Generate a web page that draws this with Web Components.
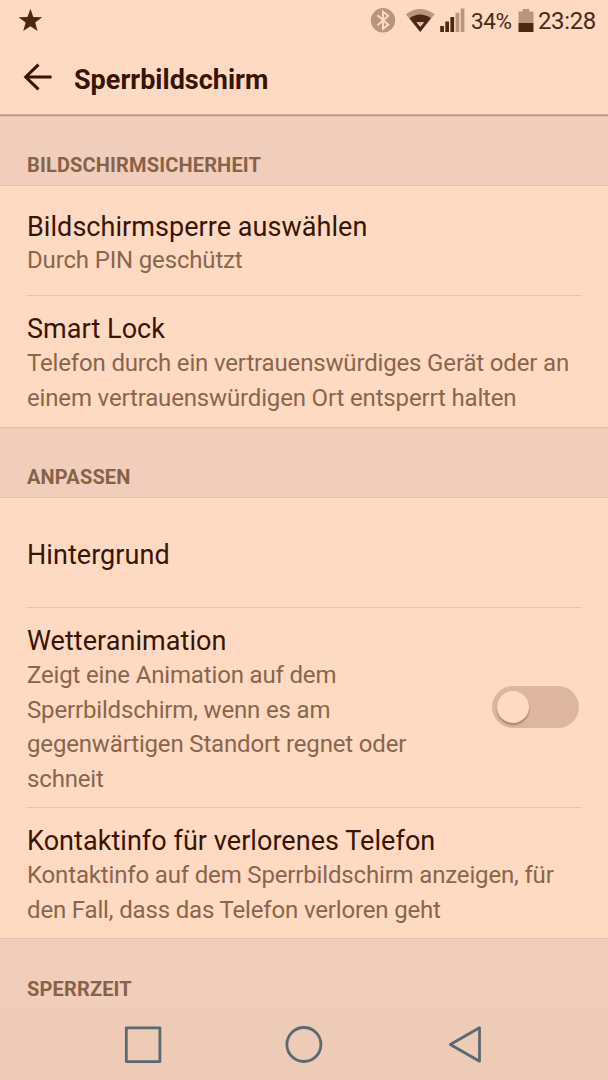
<!DOCTYPE html>
<html lang="de">
<head>
<meta charset="utf-8">
<title>Sperrbildschirm</title>
<style>
html,body{margin:0;height:100%;background:#ffdac2}
body{font-family:Roboto,"Liberation Sans",sans-serif;color:#381404;overflow:hidden}
</style>
</head>
<body>
<lock-settings></lock-settings>
<script>
const define = (name, html) => customElements.define(name, class extends HTMLElement {
  constructor() {
    super();
    this.attachShadow({ mode: 'open' }).innerHTML = html;
  }
});

define('status-bar', `
<style>
:host{display:flex;height:42px;align-items:flex-start;color:#4b2814}
svg{display:block;flex:none}
.star{margin:8px 0 0 18px}
.right{margin-left:auto;display:flex;padding-right:12px}
.t{line-height:28px;white-space:nowrap}
.pct{font-size:22.5px;width:42px;margin:7px 0 0 4px;letter-spacing:-.4px}
.time{font-size:24px;margin:7px 0 0 4px;letter-spacing:-.35px}
</style>
<svg class="star" width="25" height="24" viewBox="0 0 25 24"><path fill="#4b2814" d="M12.4.7l2.9 8.2 8.9.3-7 5.4 2.4 8.5-7.2-4.8-7.2 4.8 2.4-8.5-7-5.4 8.9-.3z"/></svg>
<div class="right">
<svg width="101" height="42" viewBox="0 0 101 42">
<circle cx="17" cy="20.3" r="12.2" fill="#b9957f"/>
<path d="M11.5 15.2l10.7 9.6-5.2 4V11.800l5.200 4-10.700 9.600" fill="none" stroke="#ffdac2" stroke-width="1.9"/>
<path d="M39.8 14.2Q54.2 3.8 68.6 14.2L54.2 32z" fill="#b9957f"/>
<path d="M43.5 18.3Q54.2 10.8 64.9 18.3L54.2 32z" fill="#4b2814"/>
<path d="M51.6 22.7h5.400l-2.700 3.200z" fill="#b9957f" stroke="#ffdac2" stroke-width="1.1"/>
<path d="M74.2 26h3.7v6h-3.7zM79.3 21.5h3.7V32h-3.7zM84.4 17h3.7v15h-3.7z" fill="#4b2814"/>
<path d="M89.6 12.8h3.7V32h-3.7zM94.7 8.5h3.7V32h-3.7z" fill="#b9957f"/>
</svg>
<span class="t pct">34%</span>
<svg width="16" height="42" viewBox="0 0 16 42" style="margin-left:5px"><path d="M.5 11.5h4.2V9h6.5v2.5h4.3V23H.5z" fill="#b9957f"/><path d="M.5 23h15v9H.5z" fill="#4b2814"/></svg>
<span class="t time">23:28</span>
</div>`);

define('app-bar', `
<style>
:host{display:flex;height:72px;position:relative;z-index:1;background:#ffdac2;border-bottom:1px solid #d6b199;box-shadow:0 1px 1px rgba(100,55,30,.4)}
svg{display:block;margin:20px 0 0 23px;flex:none}
h1{margin:20.500px 0 0 22px;font-size:27px;line-height:34px;font-weight:700}
</style>
<svg width="29" height="30" viewBox="0 0 29 30"><path d="M28.5 15H3M15.5 2.7L2.700 15l12.800 12.300" fill="none" stroke="#381404" stroke-width="3"/></svg>
<h1><slot></slot></h1>`);

define('section-header', `
<style>
:host{display:block;box-sizing:border-box;height:71px;padding:37px 27px 0;background:#f1cebb;border-top:1px solid #e3bfaa;border-bottom:1px solid #e3bfaa;color:#886248;font-size:20px;line-height:24px;font-weight:700;letter-spacing:.16px}
:host([first]){border-top-color:#f1cebb}
:host([last]){border-bottom:0;padding-top:38px}
</style>
<slot></slot>`);

define('setting-item', `
<style>
:host{display:flex;box-sizing:border-box;margin:0 27px;height:var(--h);padding-top:var(--top);border-bottom:1px solid #e6c1ab}
:host([end]){border-bottom:0}
.copy{flex:1;white-space:nowrap}
.title{font-size:27px;line-height:34px;letter-spacing:.05px}
.sum{font-size:24px;line-height:34.5px;color:#8a654d;letter-spacing:-.16px;margin-top:var(--sum-shift,0px)}
</style>
<div class="copy"><div class="title"><slot name="title"></slot></div><div class="sum"><slot></slot></div></div>
<slot name="control"></slot>`);

define('toggle-switch', `
<style>
:host{display:block;box-sizing:border-box;width:87.5px;height:42px;border-radius:21px;background:#dcb69f;padding:5px;margin:62px 2px 0 0}
i{display:block;width:32px;height:32px;border-radius:50%;background:#ffdac2;box-shadow:0 2px 2px rgba(90,45,20,.4)}
</style><i></i>`);

define('nav-bar', `
<style>
:host{display:block;height:71px;background:#eecbb6}
svg{display:block}
</style>
<svg width="608" height="71" viewBox="0 0 608 71" fill="none" stroke="#5b6970" stroke-width="2.8" stroke-linejoin="round">
<path d="M126.3 18.8h33.6v33.8h-33.6z"/><circle cx="303.9" cy="35.5" r="17"/><path d="M479.5 18.8v33.4L450.3 35.5z"/></svg>`);

define('lock-settings', `
<style>
:host{display:flex;flex-direction:column;width:608px;height:1080px;overflow:hidden;background:#ffdac2}
main{flex:1;min-height:0;overflow:hidden}
</style>
<status-bar></status-bar>
<app-bar>Sperrbildschirm</app-bar>
<main>
<section-header first>BILDSCHIRMSICHERHEIT</section-header>
<setting-item style="--h:110px;--top:24px;--sum-shift:-1px"><span slot="title">Bildschirmsperre auswählen</span>Durch PIN geschützt</setting-item>
<setting-item end style="--h:131px;--top:16px"><span slot="title">Smart Lock</span>Telefon durch ein vertrauenswürdiges Gerät oder an<br>einem vertrauenswürdigen Ort entsperrt halten</setting-item>
<section-header>ANPASSEN</section-header>
<setting-item style="--h:110px;--top:40px"><span slot="title">Hintergrund</span></setting-item>
<setting-item style="--h:200px;--top:16px"><span slot="title">Wetteranimation</span>Zeigt eine Animation auf dem<br>Sperrbildschirm, wenn es am<br>gegenwärtigen Standort regnet oder<br>schneit<toggle-switch slot="control"></toggle-switch></setting-item>
<setting-item end style="--h:130px;--top:16px"><span slot="title">Kontaktinfo für verlorenes Telefon</span>Kontaktinfo auf dem Sperrbildschirm anzeigen, für<br>den Fall, dass das Telefon verloren geht</setting-item>
<section-header last>SPERRZEIT</section-header>
</main>
<nav-bar></nav-bar>`);
</script>
</body>
</html>
